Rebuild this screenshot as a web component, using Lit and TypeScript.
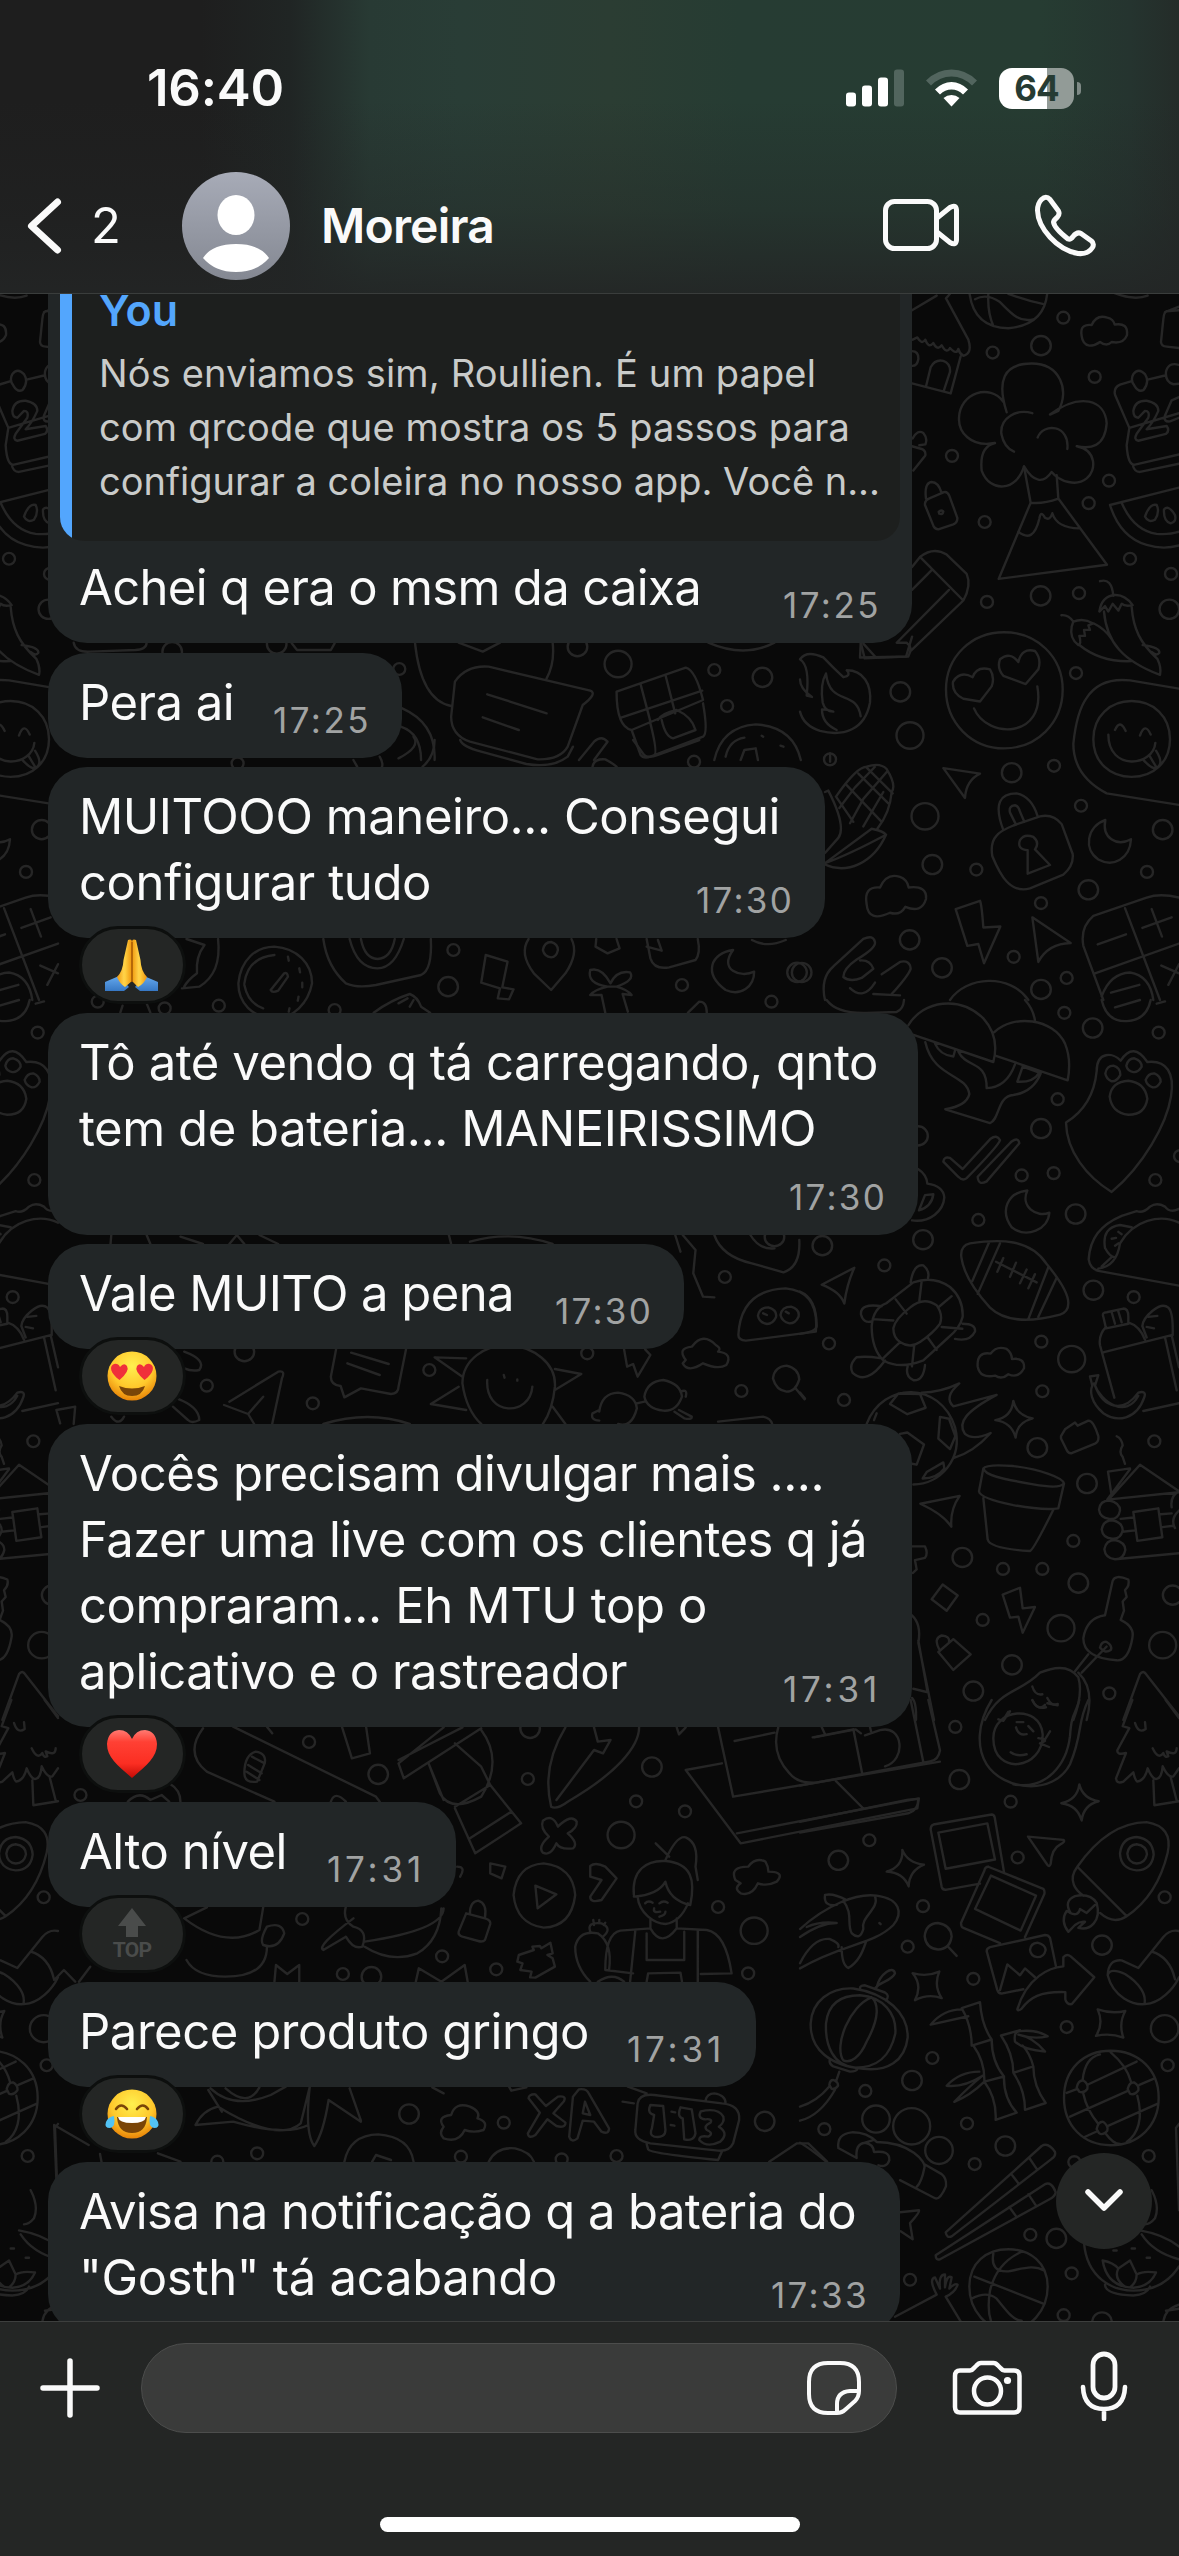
import { LitElement, html, svg, css } from "lit";
import { customElement, property } from "lit/decorators.js";

/* ---------- data ---------- */

interface Line { text: string; w: number }
interface Message {
  id: number;
  width: number;
  lines: Line[];
  time: string;
  timeW: number;
  reaction?: string;
  quote?: boolean;
  timeBelow?: boolean;
}

const QUOTE: Line[] = [
  { text: "Nós enviamos sim, Roullien. É um papel", w: 717 },
  { text: "com qrcode que mostra os 5 passos para", w: 751 },
  { text: "configurar a coleira no nosso app. Você n...", w: 781 },
];

const MESSAGES: Message[] = [
  { id: 1, width: 864, quote: true, time: "17:25", timeW: 98, lines: [{ text: "Achei q era o msm da caixa", w: 622 }] },
  { id: 2, width: 354, time: "17:25", timeW: 98, lines: [{ text: "Pera ai", w: 155 }] },
  { id: 3, width: 777, time: "17:30", timeW: 98, reaction: "pray", lines: [
    { text: "MUITOOO maneiro... Consegui", w: 701 }, { text: "configurar tudo", w: 352 }] },
  { id: 4, width: 870, time: "17:30", timeW: 98, timeBelow: true, lines: [
    { text: "Tô até vendo q tá carregando, qnto", w: 799 }, { text: "tem de bateria... MANEIRISSIMO", w: 737 }] },
  { id: 5, width: 636, time: "17:30", timeW: 98, reaction: "love", lines: [{ text: "Vale MUITO a pena", w: 435 }] },
  { id: 6, width: 864, time: "17:31", timeW: 98, reaction: "heart", lines: [
    { text: "Vocês precisam divulgar mais ....", w: 745 },
    { text: "Fazer uma live com os clientes q já", w: 788 },
    { text: "compraram... Eh MTU top o", w: 628 },
    { text: "aplicativo e o rastreador", w: 548 }] },
  { id: 7, width: 408, time: "17:31", timeW: 98, reaction: "top", lines: [{ text: "Alto nível", w: 208 }] },
  { id: 8, width: 708, time: "17:31", timeW: 98, reaction: "joy", lines: [{ text: "Parece produto gringo", w: 510 }] },
  { id: 9, width: 852, time: "17:33", timeW: 98, lines: [
    { text: "Avisa na notificação q a bateria do", w: 777 }, { text: "\"Gosth\" tá acabando", w: 478 }] },
];

/* ---------- wallpaper: line doodles, grouped in patches with their own scale ---------- */

interface Patch { x: number; y: number; sx: number; sy: number; dots: [number, number[]][]; paths: string[] }

const EAST_A: Patch = {
  x: 800, y: 280, sx: 1 / 3, sy: 0.45918,
  dots: [
    [6, [790,82,578,158,884,211,456,383,927,437,866,486,554,527,990,607,1113,640,561,701,837,682,828,856,90,1044,762,1058,843,1145,529,1284,1041,1289,723,1357,641,1474,800,1520]],
    [9.8, [723,143,722,688,1108,717,301,897,635,1073,1088,1197,397,1273,865,1328,329,1437,426,1498,723,1545,5,1508]],
    [13.5, [330,992,375,1168]],
  ],
  paths: [
    // hut
    "M336 66L410 34M438 40L505 130Q518 160 490 165Q478 160 475 150Q470 164 450 148Q440 162 425 142Q412 155 400 137Q385 150 376 130Q365 142 352 125L338 130M438 40L450 30M482 166L452 247L336 225M378 232L392 190Q405 172 430 176Q452 182 450 200L432 240M336 155Q356 155 355 172Q352 187 337 187",
    // ball
    "M508 26Q520 104 625 105Q735 98 742 26M565 30Q562 70 580 100M525 42Q560 28 600 48C640 78 660 92 700 86M625 30Q680 45 728 52",
    // clouds
    "M845 122Q838 95 875 98Q890 74 922 82Q940 85 944 97Q985 92 981 120Q970 140 935 135Q920 146 900 135Q885 143 868 143Q848 140 845 122Z",
    "M200 1360Q190 1320 240 1323Q260 1290 300 1300Q322 1306 326 1323Q382 1318 378 1348Q365 1380 316 1365Q300 1385 270 1378Q205 1400 200 1360Z",
    "M935 26Q1000 46 1043 34",
    "M1137 66L1100 68Q1092 70 1090 85L1083 135Q1084 145 1100 145L1137 148M1095 70L1137 58",
    // blossom on a volcano
    "M620 288C590 220 610 182 695 182C780 182 810 240 775 285L750 293C840 245 915 260 920 312C915 365 870 368 830 362C890 370 890 415 860 432C830 450 780 440 755 418C730 445 700 440 672 406C650 460 570 465 545 415C540 380 555 360 585 355C510 365 475 330 477 300C480 245 570 225 610 265M697 290C650 280 600 300 604 335Q612 365 642 374M713 343C730 310 810 315 802 368",
    "M672 406L692 485L596 651L921 620L775 476L770 425M692 485Q730 488 775 476M655 548Q700 575 718 520Q722 500 735 518Q750 525 757 508Q770 540 838 541",
    // calendar
    "M995 220L960 228Q940 235 945 250L988 322L980 360Q984 405 1005 402L1137 380M988 322L1137 290M1043 217L1095 208M998 402Q1002 418 1020 418L1137 400M1000 205Q1015 190 1035 205Q1050 222 1030 240Q1015 245 1003 230Q990 218 1000 205ZM1137 185Q1105 178 1098 200Q1095 222 1120 227L1137 226M1000 285Q1005 262 1040 263Q1075 268 1075 285Q1060 310 1040 325L1100 318Q1110 328 1098 335L1015 350Q1000 348 1010 335L1045 300Q1050 285 1035 285L1015 300Q1000 300 1000 285ZM1137 255L1115 262L1095 295Q1090 310 1110 308L1137 300",
    // watermelon
    "M1137 452L930 490Q960 560 1040 577Q1090 588 1137 578M965 485Q1000 545 1070 553Q1110 555 1137 548M1035 515Q1050 485 1070 490Q1080 505 1065 522Q1045 530 1035 515ZM1092 500Q1105 488 1125 512Q1130 527 1112 530Q1090 525 1092 500Z",
    // padlocks
    "M375 490Q373 480 390 475L432 462Q442 460 448 470L472 518Q473 528 460 532L415 543Q405 543 400 535ZM378 476Q372 442 395 440Q415 440 425 464M416 505Q423 500 430 504Q428 512 418 509ZM338 345Q352 325 370 333Q384 345 376 358L358 360M336 362L365 368Q378 372 376 382L340 415",
    "M577 1255Q570 1225 590 1210Q600 1200 640 1188L720 1168Q760 1162 785 1185L818 1250Q822 1275 790 1295L690 1325Q650 1333 620 1310Q600 1295 577 1255ZM610 1198C580 1140 600 1118 650 1118Q695 1125 713 1168M648 1186L630 1160Q625 1145 645 1144Q655 1145 660 1158L673 1180M683 1242Q650 1240 660 1220Q672 1205 700 1213Q720 1225 705 1240L750 1274L683 1293Z",
    // pencil
    "M336 625L360 603Q400 580 440 598L500 640Q515 665 490 698L333 807M360 603L490 698M395 632L336 675M447 675L290 790L320 790Q340 800 325 820L180 822L182 792M190 792L225 820",
    // chillies
    "M900 656Q935 648 940 688M898 722Q905 688 945 686Q975 685 998 708Q975 712 965 705L955 720L938 705L925 722L915 710ZM912 722C920 790 970 830 1080 860Q1085 845 1072 825C1020 790 1000 760 995 712M1028 795Q1080 800 1078 812Q1070 820 1055 810M784 730Q805 728 820 744Q850 735 880 748L865 752L870 762L852 762L855 775L838 775Q845 792 835 795Q808 780 815 755L820 744M838 795C880 820 930 832 995 830M882 748Q915 760 935 782",
    // heart-eyed smiley
    "M438 892C438 820 515 767 612 767C710 767 788 820 788 892C788 965 710 1020 612 1020C515 1020 438 965 438 892ZM540 918L490 912Q455 900 459 875Q480 850 518 865Q530 840 570 848Q585 865 575 885ZM677 880L610 862Q590 845 600 826Q630 808 655 832Q665 800 705 808Q725 825 715 848ZM522 933C560 1000 740 1000 712 885",
    // flame
    "M0 826Q20 805 70 822Q100 845 130 865Q155 862 140 850C190 850 215 880 210 920C195 980 130 995 60 982Q10 970 0 940M0 826Q30 840 20 905L36 908Q0 890 0 870M78 857Q60 880 68 920Q75 940 100 940Q80 935 66 935Q65 965 110 980M78 857C90 930 170 890 182 950",
    // tongue-out smiley with envelope
    "M1137 890L990 872Q900 865 860 910Q830 940 820 1010Q820 1080 920 1118L1137 1143M880 1000C880 950 930 917 995 917C1060 917 1110 950 1110 1000C1110 1050 1060 1082 995 1082C930 1082 880 1050 880 1000ZM925 990C925 1070 1060 1060 1066 1008M945 980Q960 955 977 982M1020 992Q1035 962 1052 990M1030 1045Q1060 1070 1075 1060Q1090 1050 1068 1025M1050 1038L1068 1060",
    // cursors
    "M430 1063L540 1075Q498 1090 495 1128ZM697 1388L812 1444Q745 1445 715 1485Z",
    // corn
    "M75 1270L215 1195Q250 1200 258 1208C220 1270 140 1295 75 1273M75 1270Q150 1250 258 1208M75 1115L85 1112Q140 1190 115 1215L75 1248M108 1125Q170 1060 200 1060Q240 1050 260 1065Q290 1100 275 1115Q270 1160 232 1195M108 1125L160 1180M140 1100L245 1180M175 1075L265 1140M200 1062L278 1118M150 1183L190 1130L262 1070M118 1150L165 1105L225 1060M190 1190L250 1115",
    // moon
    "M916 1176C860 1190 850 1240 895 1262C940 1280 990 1260 993 1218C950 1235 905 1215 916 1176Z",
    // bolt
    "M467 1370L540 1352Q545 1360 550 1410L601 1408L552 1488L535 1446L502 1450Z",
    // rock hand
    "M75 1568Q60 1520 100 1495L190 1435Q220 1425 225 1442Q228 1455 170 1480Q130 1500 130 1518Q150 1530 185 1520L220 1500Q210 1480 180 1482M150 1542Q190 1570 225 1530M245 1512L300 1485Q330 1480 332 1500Q325 1515 275 1555M220 1555L300 1558",
    // calculator
    "M1137 1345Q1080 1335 1040 1345L880 1385Q840 1410 850 1450L910 1568M975 1368L1080 1568M885 1510L1137 1445M893 1447L978 1425M1027 1411L1115 1388M1055 1370L1086 1430M1084 1493L1137 1510M1105 1535L1137 1490M905 1560Q930 1510 990 1508Q1050 1515 1060 1568M933 1552L1018 1535",
    "M450 1568C500 1515 630 1510 685 1568",
  ],
};

const EAST_B: Patch = {
  x: 800, y: 1000, sx: 1 / 3, sy: 0.45918,
  dots: [
    [6, [793,28,1076,71,773,216,665,382,761,377,1066,392,535,479,253,578,1001,647,724,744,87,748,132,871,727,852,1063,961,820,1178,609,1239,727,1239,548,1350,928,1510,1140,340]],
    [9.8, [878,61,723,280,354,296,827,466,67,535,369,522,880,632,712,975,861,1053,487,1214,835,1270,1118,1296,636,1448,520,1505]],
    [13.5, [815,782,783,1368,1088,1405]],
  ],
  paths: [
    // toucans
    "M325 55C370 0 480 -10 550 40Q600 80 580 135L325 72M583 70C640 30 760 40 795 95Q815 130 803 175L590 122M376 92C400 170 500 160 508 205Q500 230 436 238L570 268C600 260 590 210 640 207Q700 200 722 160M405 95Q420 120 460 123L465 110M475 112C500 150 560 130 560 192Q620 190 645 140M652 178L668 145L718 158Q700 180 652 178ZM675 0Q700 20 705 45",
    "M80 0Q110 30 200 28L290 26Q310 20 312 0",
    "M905 0Q920 48 980 46Q1040 44 1052 0M945 16L1020 0M1070 8L1095 3",
    // paw
    "M798 267Q880 230 890 155C890 110 940 115 962 132Q1000 90 1042 135C1100 130 1125 160 1113 210C1100 270 1030 360 935 418C860 385 800 330 798 267ZM916 160Q920 143 940 143Q962 148 961 163Q950 178 935 177Q918 172 916 160ZM979 143Q985 127 1003 127Q1025 132 1025 145Q1015 158 1000 157Q982 154 979 143ZM1037 174Q1045 159 1063 160Q1082 166 1082 178Q1072 192 1057 190Q1040 185 1037 174ZM929 210Q935 178 985 176Q1035 180 1042 215Q1035 250 985 250Q935 246 929 210Z",
    // check marks
    "M430 352Q432 340 450 344L488 368L572 302Q590 292 600 305Q598 315 500 388Q488 395 475 385ZM533 385L635 308Q655 298 658 312L560 395Q535 405 533 385Z",
    // hat
    "M354 368Q380 380 382 400Q430 405 433 430C430 460 390 485 336 480M357 458L375 425L400 423Q395 450 357 458Z",
    // moon
    "M682 415C620 420 600 460 635 495C680 520 745 500 748 463C710 475 660 450 682 415Z",
    // football
    "M484 560Q480 535 510 530C600 520 690 520 740 575C780 610 805 640 805 660Q805 680 780 685C700 700 620 705 570 670C520 630 490 595 484 560ZM567 528L517 612M600 530L533 640M745 582L685 695M770 605L715 690M588 570L710 615M610 562L592 592M648 572L630 603M680 587L660 617M705 597L685 628",
    // turtle
    "M215 710Q220 670 260 660L340 615Q400 600 450 625Q490 650 488 690Q480 715 445 735L370 785Q300 805 250 785Q215 760 215 710ZM280 715Q285 695 330 670Q370 645 410 665Q430 685 420 705Q400 725 360 745Q330 760 300 745Q280 735 280 715ZM287 652L320 683M365 612L358 655M455 645L417 668M487 716L425 712M410 762L383 735M336 798L343 750M250 780L300 745M218 695L280 698M332 615Q340 575 370 578Q390 590 384 605M245 667Q180 660 183 685Q190 705 215 700M488 705Q528 705 525 722Q510 745 465 738M375 795Q370 830 340 828Q315 820 323 798M240 780Q200 775 170 778Q145 795 158 812Q200 840 255 785",
    // cursors
    "M65 620L163 583Q140 620 133 661Q120 635 65 620ZM361 1097L479 1080Q450 1110 454 1147Q430 1120 361 1097Z",
    "M0 635Q50 650 50 710Q50 722 0 727M0 855L15 868",
    // clouds
    "M533 798Q530 765 572 770Q590 752 620 760Q635 768 636 782Q675 778 672 802Q655 825 625 815Q605 828 585 818Q540 825 533 798Z",
    // taco
    "M1137 455Q1110 465 1095 450Q1070 440 1050 450Q1030 465 1010 460L965 470C900 490 870 520 866 565Q870 585 895 590L1137 622M895 585Q950 580 960 530C1000 480 1080 465 1137 485M915 540Q905 495 960 490L995 495M915 540Q930 560 945 560M935 520L948 518M945 535L955 530M955 505L965 510M905 580L935 560",
    // grocery bag
    "M910 690Q905 680 920 680L970 672Q985 672 985 690L985 705L918 715ZM935 680L945 705M955 678L965 702M918 712Q895 730 900 752L943 866M985 702Q1020 710 1035 740M912 767L1115 730M1118 730Q1120 680 1105 670C1080 655 1030 690 1027 710L1040 735M1045 690L1072 688M1040 712L1062 715M1095 735L1130 850M1115 730L1137 800M1030 895L1137 878M870 820L895 817L885 840C910 890 970 900 1015 855Q1040 850 1033 865C1010 915 950 920 910 900C870 875 870 850 877 840ZM882 835C905 880 980 910 1015 862",
    // soccer ball with comet tail
    "M200 923C250 830 420 830 465 930C490 1000 420 1055 340 1055M270 880L295 857L360 858L377 888L322 902ZM420 908L447 912L466 950L450 978L415 955ZM300 945L322 942L372 968L350 1012L336 1010M368 1042L380 1028L430 1007L433 1020Q410 1042 368 1042ZM365 855Q420 855 478 835Q430 865 460 885L590 860C500 895 470 920 495 945Q520 960 572 943Q520 985 462 997M222 915L230 900",
    // sparkle, plate
    "M640 873Q650 905 698 911Q650 920 647 953Q635 920 586 915Q635 908 640 873ZM783 950L795 935L825 920L833 927L865 916Q880 915 895 950Q897 962 885 966L815 987Q805 988 800 980L783 955Z",
    // flower pot
    "M550 1020Q560 1010 640 1015C720 1022 790 1040 792 1053Q780 1065 700 1055C600 1042 555 1035 550 1020ZM550 1020L537 1070Q540 1085 640 1100Q730 1112 775 1107L792 1053M550 1085L563 1175Q570 1195 690 1200Q700 1198 760 1110",
    // log cabin
    "M950 950Q965 955 968 970Q955 985 968 995L975 1010M924 1027L990 1020M924 1027L935 1080M990 1022L922 1088L1137 1072M928 1086L1020 1012L1137 1070M897 1110Q900 1090 928 1090Q960 1095 960 1112Q955 1132 928 1130Q900 1128 897 1110ZM905 1153Q910 1133 937 1133Q968 1138 968 1155Q962 1175 937 1173Q908 1172 905 1153ZM913 1196Q918 1176 945 1176Q976 1181 976 1198Q970 1219 945 1218Q916 1216 913 1196ZM1000 1115L1075 1107L1087 1170L1012 1178ZM962 1130L1000 1127M968 1158L1005 1155M1082 1120L1115 1118M1087 1148L1120 1145M945 1218L1137 1205M1137 1070Q1110 1080 1115 1105M1137 1112Q1110 1130 1125 1150",
    // small shapes
    "M336 1190L375 1190Q385 1205 375 1215L345 1220L350 1240L338 1248M395 1305L428 1273L473 1297L440 1330ZM608 1295L660 1280L668 1325L705 1322L668 1378L655 1343L630 1345ZM415 1420L460 1392L512 1425L460 1459ZM417 1413Q400 1390 425 1384Q450 1385 447 1398",
    // key
    "M915 1340L938 1265Q945 1250 985 1262Q990 1275 975 1285L980 1300L968 1310L972 1330L962 1350Q1005 1365 997 1390Q985 1440 950 1438C890 1435 850 1420 850 1390Q860 1345 915 1340ZM900 1410Q905 1396 920 1398Q937 1405 933 1415Q915 1425 900 1410ZM920 1408L845 1465M865 1425L825 1462",
    // avocado top
    "M555 1568C600 1500 660 1510 720 1465Q800 1440 835 1475Q850 1510 820 1568M835 1465Q885 1500 860 1568M697 1495Q705 1515 727 1512M697 1525Q715 1550 735 1535M742 1520Q755 1540 773 1533M610 1568L625 1550",
    // pine top
    "M970 1568L1020 1468Q1030 1458 1040 1470L1137 1560",
    // laptop edge
    "M336 1340Q365 1360 355 1400L402 1568M355 1395L382 1505M340 1500L380 1507M336 1520Q350 1530 348 1568",
  ],
};

const EAST_C: Patch = {
  x: 800, y: 1700, sx: 1 / 3, sy: 0.40179,
  dots: [
    [6, [466,67,632,253,208,349,653,392,369,513,323,614,1094,491,520,694,800,814,1103,909,397,891,196,973,73,1068,501,1054,1046,1135,524,1155,691,1331,330,1443,815,1427,791,1531,823,1150]],
    [9.8, [478,198,115,399,906,610,336,947,616,1110,769,1340,906,1548]],
    [13.8, [1094,818,228,1043,417,1121]],
    [18.5, [335,1061]],
  ],
  paths: [
    // laptop
    "M385 0L420 125Q415 150 390 153L0 213M332 0L370 155M38 93L160 73L187 185M195 88L240 75C310 60 320 150 255 165M0 303L325 248L355 246Q355 275 325 282L0 330M108 202L190 270M65 67L75 85M210 67L213 78",
    // avocado
    "M575 0C530 60 530 120 560 160C610 225 760 240 810 160C850 80 830 60 865 0M640 210C740 225 800 160 810 90C815 30 825 40 838 0M580 95C580 20 720 10 728 85C730 175 580 190 580 95ZM648 68Q655 90 680 85M650 55L670 55M685 65L700 78M632 130Q650 142 680 135M595 48L610 52L630 28M715 95L735 98L750 78M735 102L720 108L747 117M697 0Q710 25 738 18M742 8L773 13",
    // pine
    "M997 0L968 65L988 70L952 125Q950 138 978 132L948 195Q950 210 970 203L1000 180Q1005 200 1012 203Q1035 200 1043 170Q1055 195 1068 197Q1085 195 1088 165Q1105 195 1120 190L1137 170M1005 57Q1015 85 1037 72L1035 55M1058 120Q1075 150 1090 132Q1095 145 1105 140L1100 128Q1130 140 1130 120M1060 200L1063 262L1137 252M1112 192L1130 250M1097 0L1137 45",
    // sparkles
    "M838 210Q848 245 896 252Q850 262 845 300Q832 262 784 257Q832 248 838 210ZM307 373Q322 405 372 410Q328 425 326 464Q310 430 260 427Q310 415 307 373ZM338 680Q380 690 418 676Q400 710 425 742Q385 730 345 747Q368 710 338 680ZM893 770Q935 782 976 774Q955 805 970 840Q930 828 888 836Q912 805 893 770Z",
    // photos
    "M392 322Q392 312 400 310L575 285Q582 285 584 292L612 428M392 322L425 465Q428 474 440 472L540 457M415 330L562 307L585 397L437 420ZM565 415L730 470Q735 475 733 483L675 590M565 415Q555 415 553 425L483 555Q483 565 490 567L600 605M573 437L708 487L662 574L525 520ZM560 625Q560 618 570 615L735 585Q745 585 750 592L768 663M560 625L592 722Q596 732 608 730L670 720M690 622Q692 605 712 604Q735 608 737 622Q732 640 712 640Q692 638 690 622ZM600 722L622 658L660 685L675 668L705 690",
    // arrow
    "M652 770C680 690 750 665 790 663L790 640Q800 630 812 638L883 690L815 757Q800 758 796 745L796 727C720 725 690 740 665 768Q655 775 652 770Z",
    // cursor
    "M684 340L790 348Q798 352 780 360Q755 370 752 408Q748 418 742 410Z",
    // rocket
    "M832 415C870 370 940 305 1040 304Q1120 315 1103 380C1080 460 1030 510 980 538Q940 560 900 530M832 415L980 538M832 415C800 450 830 475 850 487M960 382Q965 343 1010 341Q1058 346 1061 385Q1055 424 1010 424Q962 420 960 382ZM982 382Q986 360 1010 359Q1040 363 1041 384Q1035 407 1010 407Q984 405 982 382ZM805 577Q780 550 800 525L812 530Q790 500 825 488Q870 480 890 505C905 550 870 575 835 567L855 552Q840 550 825 560ZM810 530Q835 540 840 520L860 530L885 510",
    // koi
    "M0 570C80 510 170 480 230 487C300 495 310 530 280 560C220 610 130 605 0 668M75 485Q100 480 140 498M75 485Q70 515 110 510M130 500C160 530 140 560 155 580Q180 600 190 570C180 540 240 520 225 488M0 590Q60 555 110 555Q60 550 20 565M0 655Q40 590 90 595Q120 605 115 615M125 615Q125 660 145 667C180 650 190 620 198 602M238 555L242 558",
    // magnifier
    "M374 588Q378 556 414 555Q452 560 455 588Q450 620 414 621Q378 618 374 588ZM443 613L470 637",
    // lantern
    "M32 805C35 750 90 715 160 718C260 730 325 780 323 840C315 900 260 925 190 918C90 910 30 870 32 805ZM78 805C85 750 130 735 180 735C250 740 290 780 286 830C270 890 230 915 165 915C100 910 75 860 78 805ZM215 740C150 760 100 860 130 897C150 905 180 890 200 850C240 790 235 755 215 740ZM182 722Q175 710 195 710L255 728Q270 735 258 748M90 893Q85 905 100 912L150 925Q170 925 172 918M230 715C240 680 280 660 285 680C275 700 240 700 225 718M118 925L108 950M88 958Q90 945 101 946Q115 950 114 960Q105 970 95 968ZM88 962Q50 1000 0 1012M105 970Q60 1035 0 1047",
    // bamboo
    "M485 767L540 752Q545 810 575 845L515 860Q515 810 485 767ZM575 845Q575 900 612 937L553 950Q555 900 520 860M612 937Q610 990 650 1027L587 1045Q590 990 553 950M485 770Q430 770 392 808L505 787M538 925Q480 925 440 960Q490 965 548 935Q510 960 463 1000Q510 985 553 950M603 835L660 822M603 835Q640 880 640 928L700 912Q690 880 668 860M640 928Q675 970 675 1020L737 1003Q700 960 700 912M645 850Q640 825 660 824Q710 820 743 837Q700 845 655 833Q700 840 735 875Q670 870 645 850Z",
    // stocking
    "M1137 575Q1110 570 1090 590L1015 667L965 648Q925 645 923 685C940 740 1000 760 1035 757C1080 755 1120 720 1137 690M923 685Q930 665 975 682C1020 705 1040 735 1033 757M1055 626Q1110 640 1125 695",
    // globe
    "M792 990C792 920 850 873 932 873C1015 873 1076 920 1076 990C1076 1060 1015 1108 932 1108C850 1108 792 1060 792 990ZM830 965Q835 945 850 947Q866 955 862 968Q850 980 838 975ZM983 968Q988 950 1003 952Q1018 960 1015 972Q1003 985 990 980ZM890 1068Q895 1048 910 1050Q926 1060 922 1072Q908 1085 897 1078ZM900 882Q855 890 848 945M800 978L832 968M864 957L1010 900M850 980Q860 1020 895 1055M810 1037L985 972M1018 958L1060 943M932 877Q980 910 993 950M1012 985C1030 1040 1015 1080 980 1100M855 1087L890 1074M924 1060L1072 1005M918 1080Q940 1105 960 1105",
    // chopsticks
    "M437 1325L725 1110Q745 1100 765 1125Q768 1135 755 1142L455 1335Q440 1340 437 1325ZM407 1382L735 1205Q755 1198 767 1225Q765 1235 750 1242L420 1392Q407 1395 407 1382ZM688 1140L710 1167M636 1182L657 1205M685 1230L707 1257M628 1262L650 1287",
    // scroll
    "M115 1115Q110 1080 155 1076Q200 1075 230 1100C330 1100 380 1150 373 1165Q365 1200 350 1212M115 1115L170 1140Q165 1105 195 1102Q220 1105 222 1125Q270 1120 268 1145Q260 1165 235 1158M222 1095L190 1103M300 1195L405 1240Q420 1245 438 1210Q440 1190 425 1180L372 1155M0 1102Q20 1110 80 1150",
    // star
    "M300 1275L357 1270Q360 1275 330 1302L338 1342L302 1322",
    // basketball
    "M508 1460C508 1400 560 1367 625 1367C690 1367 743 1400 743 1460C743 1520 690 1568 625 1568C560 1568 508 1520 508 1460ZM523 1435L728 1502M580 1378Q570 1425 625 1422C670 1415 700 1405 732 1420M515 1490Q560 1470 590 1490C620 1520 640 1545 665 1545M668 1372Q590 1400 570 1470Q560 1520 575 1550",
    // hand
    "M285 1535L410 1480M437 1485L483 1548M410 1480Q385 1440 405 1437L420 1465Q415 1430 435 1430L435 1462Q440 1430 455 1437L448 1465Q465 1450 473 1455Q465 1475 437 1485",
    // lotus pot
    "M852 1350C860 1440 940 1470 1000 1470Q1090 1470 1137 1410M915 1455Q915 1480 1000 1482Q1040 1480 1050 1460M908 1395Q940 1400 955 1415L990 1395L1010 1430Q1030 1420 1068 1425Q1050 1460 1000 1463Q920 1460 908 1395ZM955 1415Q940 1440 975 1460M1010 1430Q1010 1450 990 1462M1055 1220Q1080 1260 1065 1290Q1050 1305 1035 1305M1020 1320Q1090 1330 1137 1360M1025 1330Q1060 1375 1137 1392M940 1370L950 1370M995 1365L1005 1365M1040 1388L1050 1388",
    "M1128 1065L1137 1055M1128 1065L1137 1270M1090 1548Q1095 1515 1137 1505M1098 1520L1137 1515",
  ],
};

const MID: Patch[] = [
  {
    x: 0, y: 280, sx: 0.75191, sy: 1 / 3,
    dots: [[6, [531,1167,950,1170,967,1278]], [9.8, [768,1100,1014,1192,229,1115,368,1092]], [13.5, [822,1152]]],
    paths: [
      // chat bubble
      "M605 1205Q620 1155 650 1160L785 1232Q795 1240 775 1275L755 1400Q745 1440 715 1438L625 1385Q600 1365 600 1310ZM648 1243L727 1300M642 1312L690 1350M552 1090Q560 1260 600 1278M610 1088L642 1115L665 1088M735 1088Q738 1150 727 1195",
      // gift
      "M820 1235L912 1163Q925 1170 935 1260L840 1350Q820 1340 820 1235ZM826 1313L934 1232M852 1213L865 1325M885 1185L898 1300M840 1350L852 1425Q856 1437 865 1430L935 1370Q942 1360 935 1270M875 1320Q880 1300 900 1290Q920 1310 925 1350L895 1375Q885 1370 880 1320M865 1330Q875 1420 870 1425",
      // pan
      "M950 1440Q960 1340 1005 1333Q1055 1340 1065 1440M965 1430Q970 1380 990 1373M985 1440L990 1410L1005 1405L1008 1440M535 1285Q580 1330 578 1440M533 1340Q560 1360 560 1440M770 1440L790 1385Q800 1365 808 1385L790 1440M98 1088Q100 1118 120 1115L180 1110Q195 1108 195 1088M388 1090L395 1110L440 1110L445 1090M942 1088Q990 1135 1030 1088M1145 1090L1150 1135L1205 1130L1213 1070M1013 1367L1015 1370M1038 1397L1042 1400M1104 1445L1104 1420",
    ],
  },
  {
    x: 0, y: 740, sx: 0.75191, sy: 1 / 3,
    dots: [[6, [923,65,603,630,907,735,291,797,1026,785,445,810,219,805,130,785,316,70]], [9.8, [596,740,1060,697]]],
    paths: [
      "M612 0Q615 20 640 35L700 72Q735 85 755 50L762 20M842 0L855 40Q860 58 875 45L930 0M578 0Q578 50 562 80M530 55Q560 20 550 -10M788 80Q790 55 805 58Q815 70 820 80M470 60L475 80M505 50Q510 70 508 80",
      // timer
      "M317 730C320 660 340 620 365 620C395 625 415 670 415 730C410 790 390 835 365 838C335 830 317 790 317 730ZM325 730C328 680 340 650 365 645M325 735Q330 790 350 805M360 750L378 700Q382 695 383 710L370 752Q362 760 360 750ZM383 650L384 662M398 685L399 697M402 728L402 742M397 770L396 782M385 805L384 815",
      // croissant, speaker, card, pin, bow, shield, moon
      "M248 597L272 615Q260 650 262 700Q250 720 245 740M290 597Q295 700 265 740L242 745",
      "M430 597Q435 680 460 730Q475 745 500 735L560 705Q575 690 573 597M465 597Q475 685 502 685Q525 685 537 597M480 597Q485 655 502 657Q520 655 525 597",
      "M646 645L675 665L668 742L683 748L677 778L662 775L665 745L640 728Z",
      "M703 597Q690 640 710 700L733 750L752 700Q770 640 760 597M722 630Q724 606 733 606Q742 612 742 630Q740 652 733 652Q724 650 722 630Z",
      "M785 690Q800 680 812 730Q820 690 838 697Q845 720 820 740Q835 750 840 765L828 762L835 815M785 690Q780 730 808 740Q790 750 785 765L800 765L805 818M808 740L820 740M793 597L792 620L808 640L824 625L820 597",
      "M860 597L865 655Q870 690 890 682L925 660Q932 640 928 597M860 620L880 632L875 600",
      "M975 630C945 640 935 700 965 750C985 770 1003 740 1003 695C985 715 955 690 975 630Z",
      "M497 818Q520 780 545 762Q555 770 560 800L572 818M530 790L542 775M545 800L550 780M915 818L930 785Q940 785 940 818M1000 600Q1020 625 1045 600",
      "M160 818L163 797M200 818L195 790",
    ],
  },
  {
    x: 0, y: 1220, sx: 0.75191, sy: 1 / 3,
    dots: [[6, [964,171,571,450,416,550,275,497,986,513,781,400]], [9.8, [325,395,1030,50]]],
    paths: [
      "M908 45L925 90L922 160L935 230L950 232M898 45L905 95M950 45Q960 110 1000 130L1042 157Q1065 140 1063 60M998 45Q1010 90 1030 85M148 45L147 72M195 45L200 72M240 50L270 72M305 72L315 45L325 72M345 45L370 72M597 45L600 72M625 65Q680 30 735 72",
      // note
      "M447 388L440 470Q440 495 453 498L458 532L480 505L520 522Q530 520 530 500L540 388M467 398L517 432M462 430L505 465",
      // sun
      "M615 490C615 420 645 375 675 375C710 380 740 430 738 500Q735 570 722 612M615 490Q620 570 640 612M620 415L578 412L615 470M610 500L573 552L620 570M738 447L773 462L738 510M735 560L752 612M648 480C645 590 705 590 708 500M670 465L671 473M688 478L688 482M305 545L370 455Q380 450 375 475L362 612M298 555L330 582L350 530M330 582L338 612",
      "M830 388L834 440L842 432L848 470L865 405L858 388",
      "M912 420Q900 385 920 380Q935 335 952 375Q960 385 955 395Q975 400 966 435Q955 450 935 430Q915 460 908 430Z",
      // glasses
      "M797 575Q800 520 822 518Q845 525 847 565Q840 625 822 612M857 530Q860 485 882 480Q905 490 907 530Q900 575 882 572Q860 565 857 530ZM847 550L857 545M797 570L788 580Q785 600 797 602M905 515Q915 505 912 530M903 570L920 590Q920 600 910 595L897 575M430 612Q490 570 545 612M955 605L1015 590Q1025 595 1027 612",
      "M1028 475Q1030 440 1046 437Q1062 445 1063 478Q1058 515 1046 515Q1032 510 1028 475ZM1058 505L1070 538M245 395Q275 420 265 450Q255 455 245 445M235 535Q265 560 265 600Q255 612 250 600L230 560M75 570L100 560L98 612M75 570L80 610M148 590Q158 620 165 590",
      // ghost
      "M982 345Q985 210 1045 205Q1090 215 1085 335L992 362Q982 360 982 345ZM1008 287Q1010 262 1022 262Q1034 270 1032 292Q1028 312 1020 312Q1010 308 1008 287ZM1038 285Q1040 260 1052 260Q1064 268 1062 290Q1058 310 1050 310Q1040 305 1038 285ZM1015 280L1020 285M1045 275L1049 280",
    ],
  },
  {
    x: 0, y: 1700, sx: 0.75191, sy: 1 / 3,
    dots: [[6, [411,126,702,237,846,304,911,334,955,621,402,657,588,769,456,822,660,808,995,820,342,1360,670,1268,820,1368,613,1370,289,1385,747,1378,107,285]], [9.8, [503,223,867,201,705,85,544,1242,1017,1264,494,830]], [13.5, [826,405,1003,692]]],
    paths: [
      // skateboard
      "M310 80L500 290L505 305M270 85Q245 160 275 215L365 305M325 220Q325 165 340 155Q355 160 352 190L342 245Q325 250 325 220ZM330 195L348 220M328 215L345 240M335 170L352 190M355 80L362 100M440 305Q445 270 460 305M170 305Q185 270 200 300L215 285L225 305M225 250Q240 270 240 305",
      // drum
      "M455 82L468 175L492 160L487 82M590 82L530 190L537 235L640 85M530 180L615 82M570 190L585 280Q600 340 640 290C660 220 660 150 640 90M605 130L640 200L652 255L693 370L632 460L605 325M652 255L605 320M680 335L625 415M570 190L590 300",
      "M752 82Q720 200 733 320Q740 330 755 305C820 220 850 140 850 82M790 82L795 125L812 120L802 160L790 150L740 300",
      "M900 82L903 103L912 82",
      // x mark
      "M722 362Q735 340 742 380Q760 340 767 365Q768 385 755 400Q770 430 762 445Q745 450 740 430Q732 470 722 458Q715 440 730 410Q718 385 722 362Z",
      // laptop
      "M955 82L975 290L1250 185M912 210L960 190M912 210L985 430L1220 325L1222 295L980 400M977 123L1030 98M1035 82Q1025 160 1050 220Q1060 250 1085 248M1083 112L1138 88L1145 100",
      // play
      "M683 585Q687 495 723 490Q762 500 765 585Q760 680 723 683Q687 672 683 585ZM712 557L740 583L715 625ZM785 498Q792 485 805 500L820 535L800 600Q785 610 785 590L800 540L785 530ZM652 490L672 500L667 535L652 520ZM608 500Q620 500 612 530",
      // woman
      "M885 480Q900 405 912 412Q930 430 925 500L928 540M872 430L890 470M843 585C840 510 860 480 885 483C920 490 925 540 918 615Q890 600 885 545Q875 585 843 590M848 590C850 640 870 670 885 672Q905 665 915 610M858 610Q862 600 868 608M877 610Q882 600 888 608M870 625Q868 640 878 635M877 650Q885 645 885 635M865 655L865 685Q880 745 900 685L900 655M865 685L825 692Q805 700 805 810L842 820M900 685L940 690Q965 700 973 820L932 822M845 690L838 845M860 700L860 780L910 780L910 695M928 690L928 845M860 845L862 820L905 818L907 845M765 740Q770 690 795 700Q815 730 810 810M765 740Q765 800 785 845M795 845Q815 815 830 845M785 695Q780 665 800 670Q815 685 802 710M790 675L789 660M797 670L797 660M803 675L805 668",
      "M978 540Q970 500 995 500Q1005 470 1018 485Q1022 500 1022 515Q1045 515 1033 545Q1020 560 1008 550Q1000 590 985 580Q975 565 985 550Z",
      // padlock, puzzle, shapes
      "M620 640L645 655Q653 660 652 672L645 720Q642 727 636 723L615 710Q609 705 610 695ZM625 640Q625 605 636 602Q648 610 645 652",
      "M690 765L710 750L708 740L718 738L720 745L732 728L735 760L728 765L735 775L738 800L712 833L705 832L707 815L692 810L695 790L688 785Z",
      "M460 620Q455 660 470 680Q490 690 482 740Q470 750 460 710L430 750Q420 740 470 655M590 625Q590 690 485 725M485 740Q520 790 555 760Q585 720 587 625M245 655L275 622M245 655Q300 750 345 690L350 622M355 680Q345 720 350 735Q370 750 378 700Q375 665 355 680M355 740Q355 830 300 830Q260 830 248 780M365 845L367 795L382 822L398 795L398 845M553 845L557 805L587 845L618 795L622 845M72 840L85 810L100 845M105 845L120 800",
      // rope and whale
      "M260 1275Q270 1230 290 1220Q370 1330 400 1270L412 1160M260 1275L310 1265Q380 1310 410 1275M412 1160Q405 1300 418 1338Q430 1300 437 1200L480 1265M295 1235L277 1170M280 1165Q310 1230 360 1185L380 1160M300 1165Q330 1225 345 1162M465 1165L480 1262M575 1162L590 1180",
      // hanging letters
      "M712 1183L726 1218L742 1190Q754 1186 750 1204L736 1240L752 1268Q752 1285 740 1278L728 1258L712 1305Q703 1318 702 1300L718 1238L703 1195Q703 1182 712 1183ZM770 1168Q780 1165 783 1180L810 1285Q810 1305 800 1295L790 1265L775 1262L768 1315Q760 1330 757 1310L762 1190ZM775 1240L785 1245L778 1205Z",
      // alarm clock
      "M848 1210Q850 1180 870 1185L960 1210Q985 1215 983 1260L975 1330Q970 1355 955 1352L865 1330Q843 1320 845 1290ZM938 1203Q940 1180 950 1180Q965 1185 965 1210M860 1332L862 1348Q865 1360 955 1380L960 1355M828 1205L843 1210M835 1160L860 1180M865 1215L882 1218L885 1290Q885 1315 870 1310Q863 1305 867 1285L870 1245Q860 1240 865 1215ZM893 1235L898 1237M892 1275L897 1277M905 1222L920 1228L925 1300Q923 1325 910 1318L908 1255Q900 1252 905 1222ZM932 1234Q955 1222 962 1250Q964 1268 956 1280Q970 1300 958 1325Q940 1345 930 1320Q930 1305 942 1310Q950 1300 940 1290Q935 1278 945 1268Q948 1255 938 1258Q927 1255 932 1234Z",
      "M590 1280Q580 1250 600 1245Q605 1205 625 1220Q640 1235 635 1255Q650 1265 643 1290Q630 1300 618 1290Q610 1330 590 1315Q583 1300 590 1280Z",
      "M458 1385Q465 1305 503 1303Q545 1310 550 1385M495 1385L500 1365L520 1380M650 1385Q660 1340 685 1345Q705 1355 710 1385M1023 1385L1060 1330L1075 1330L1100 1385M75 1440L72 1275L118 1335M135 1385L133 1362M210 1360L240 1385M677 1160L680 1172L700 1162",
    ],
  },
];

@customElement("chat-wallpaper")
class ChatWallpaper extends LitElement {
  static styles = css`
    :host { display: block; }
    .canvas { display: block; width: 1179px; height: 2028px; }
    .ink { fill: none; stroke: #262626; stroke-width: 2.4; stroke-linecap: round; stroke-linejoin: round; }
    .ink path, .ink ellipse { vector-effect: non-scaling-stroke; }
  `;
  private patch(p: Patch) {
    return svg`<g transform="translate(${p.x} ${p.y}) scale(${p.sx} ${p.sy})">
      ${p.paths.map((d) => svg`<path d=${d}></path>`)}
      ${p.dots.map(([r, c]) => {
        const out = [];
        for (let i = 0; i < c.length; i += 2)
          out.push(svg`<ellipse cx=${c[i]} cy=${c[i + 1]} rx=${r / p.sx} ry=${(r * 0.98) / p.sy}></ellipse>`);
        return out;
      })}
    </g>`;
  }
  render() {
    const east = [EAST_A, EAST_B, EAST_C];
    return html`<svg class="canvas" viewBox="0 293 1179 2028">
      <g class="ink">
        ${MID.map((p) => this.patch(p))}
        ${east.map((p) => this.patch(p))}
        <g transform="translate(-1121 0)">${east.map((p) => this.patch(p))}</g>
      </g>
    </svg>`;
  }
}

/* ---------- text that is tracked to a given measure ---------- */

@customElement("tracked-text")
class TrackedText extends LitElement {
  @property() text = "";
  @property({ type: Number }) measure = 0;
  static styles = css`
    :host { display: block; white-space: pre; }
    .run { display: inline-block; }
  `;
  render() {
    return html`<span class="run">${this.text}</span>`;
  }
  firstUpdated() {
    const run = this.renderRoot.querySelector<HTMLElement>(".run")!;
    const gap = (this.measure - run.getBoundingClientRect().width) / this.text.length;
    run.style.letterSpacing = `${gap.toFixed(3)}px`;
  }
}

/* ---------- reactions ---------- */

const face = svg`
  <defs>
    <radialGradient id="skin" cx="50%" cy="30%" r="72%">
      <stop offset="0" stop-color="#fff04f"></stop>
      <stop offset=".6" stop-color="#ffc82c"></stop>
      <stop offset="1" stop-color="#e77f05"></stop>
    </radialGradient>
  </defs>
  <circle cx="27" cy="27" r="24.500" fill="url(#skin)"></circle>`;

const EMOJI: Record<string, unknown> = {
  pray: svg`
    <defs><linearGradient id="hand" x1="0" x2="1"><stop offset="0" stop-color="#f0990e"></stop><stop offset=".45" stop-color="#ffd24a"></stop><stop offset=".55" stop-color="#ffcf3f"></stop><stop offset="1" stop-color="#ee930d"></stop></linearGradient>
    <linearGradient id="cuff" x1="0" y1="0" x2="0" y2="1"><stop offset="0" stop-color="#65a9ee"></stop><stop offset="1" stop-color="#3778c4"></stop></linearGradient></defs>
    <path d="M0 44L14 38L24 49L19 53H0ZM53 44L39 38L30 49L35 53H53Z" fill="url(#cuff)"></path>
    <path d="M23 2Q27 .5 27 4V43L20 49Q15 46 12 39Q18 33 18.500 22Z" fill="url(#hand)"></path>
    <path d="M31 2Q27 .5 27 4V43L33 49Q39 46 42 39Q36 33 35.500 22Z" fill="url(#hand)"></path>
    <path d="M27 4V44" stroke="#a85c06" stroke-width="1.600"></path>`,
  love: svg`${face}
    <path d="M14.500 31C5 24 4 17 9 15Q13 14 15 18Q19 13 22 17Q25 22 14.500 31ZM39.500 31C49 24 50 17 45 15Q41 14 39 18Q35 13 32 17Q29 22 39.500 31Z" fill="#f0303a"></path>
    <path d="M14 37Q27 42 40 37Q37 47 27 47Q17 47 14 37Z" fill="#7a4508"></path>`,
  heart: svg`
    <defs><linearGradient id="red" x1="0" y1="0" x2="0" y2="1"><stop offset="0" stop-color="#ff7a72"></stop><stop offset=".25" stop-color="#ff4034"></stop><stop offset=".7" stop-color="#fb2e22"></stop><stop offset="1" stop-color="#c40b06"></stop></linearGradient></defs>
    <path d="M27 51C12 38 2 30 2 17Q3 4 14 3Q23 3 27 12Q31 3 40 3Q51 4 52 17C52 30 42 38 27 51Z" fill="url(#red)"></path>`,
  joy: svg`${face}
    <path d="M11 22Q16 15 22 22M32 22Q38 15 43 22" fill="none" stroke="#7a4508" stroke-width="2.600" stroke-linecap="round"></path>
    <path d="M12 30H42Q41 46 27 46Q13 46 12 30Z" fill="#7a4508"></path>
    <path d="M13 30H41Q40 36 27 36Q14 36 13 30Z" fill="#fff"></path>
    <path d="M9 29Q11 40 5 41Q-1 41 1 35Q3 30 9 29ZM45 29Q43 40 49 41Q55 41 53 35Q51 30 45 29Z" fill="#52c3f5"></path>`,
};

@customElement("chat-reaction")
class ChatReaction extends LitElement {
  @property() kind = "";
  static styles = css`
    :host { display: block; }
    .pill {
      box-sizing: border-box; width: 107px; height: 78px; border-radius: 39px;
      border: 3px solid #0d0f0e; background: #242625; padding-right: 1px;
      display: flex; align-items: center; justify-content: center;
    }
    .glyph { display: block; width: 54px; height: 54px; overflow: visible; }
    .top { display: flex; flex-direction: column; align-items: center; padding-top: 1px; }
    .arrow { display: block; width: 30px; height: 29px; }
    .word { font: 700 21px/22px Roboto, "Liberation Sans", sans-serif; letter-spacing: -.8px; color: #4a4c4b; margin-top: 2px; }
  `;
  render() {
    return html`<div class="pill">
      ${this.kind === "top"
        ? html`<div class="top">
            <svg class="arrow" viewBox="0 0 30 29"><path d="M15 0L29 18H21V29H9V18H1Z" fill="#4a4c4b"></path></svg>
            <span class="word">TOP</span>
          </div>`
        : html`<svg class="glyph" viewBox="0 0 54 54">${EMOJI[this.kind]}</svg>`}
    </div>`;
  }
}

/* ---------- message ---------- */

@customElement("chat-message")
class ChatMessage extends LitElement {
  @property({ attribute: false }) msg!: Message;
  static styles = css`
    :host { display: block; }
    .bubble {
      box-sizing: border-box; display: flex; flex-direction: column;
      padding: 17px 31px 20px 31px; border-radius: 39px; background: #222627; color: #fafafa;
    }
    .bubble.quoted { padding-top: 12px; }
    .text { font-size: 49px; line-height: 66px; }
    .time { align-self: flex-end; margin-top: -34px; font-size: 35px; line-height: 36px; color: #a1a3a3; }
    .time.below { margin-top: 17px; }
    .quote {
      margin: 0 -19px 14px -19px; padding: 23px 20px 33px 39px; border-radius: 24px;
      background: linear-gradient(to right, #53a6fd 12px, #1d1f1e 12px);
    }
    .author { font-size: 43px; line-height: 54px; font-weight: 600; color: #53a6fd; margin-bottom: 9px; }
    .excerpt { font-size: 38px; line-height: 54px; color: #c9cbca; }
    .reaction { margin: -12px 0 -66px 31px; }
  `;
  render() {
    const m = this.msg;
    return html`
      <div class="bubble ${m.quote ? "quoted" : ""}" style="width:${m.width}px">
        ${m.quote
          ? html`<div class="quote">
              <tracked-text class="author" text="You" measure="79"></tracked-text>
              ${QUOTE.map((l) => html`<tracked-text class="excerpt" .text=${l.text} .measure=${l.w}></tracked-text>`)}
            </div>`
          : ""}
        ${m.lines.map((l) => html`<tracked-text class="text" .text=${l.text} .measure=${l.w}></tracked-text>`)}
        <tracked-text class="time ${m.timeBelow ? "below" : ""}" .text=${m.time} .measure=${m.timeW}></tracked-text>
      </div>
      ${m.reaction ? html`<chat-reaction class="reaction" kind=${m.reaction}></chat-reaction>` : ""}
    `;
  }
}

/* ---------- page ---------- */

@customElement("app-root")
class AppRoot extends LitElement {
  static styles = css`
    :host { display: block; font-family: Inter, "Liberation Sans", sans-serif; color: #fafafa; }
    .phone { width: 1179px; height: 2556px; display: flex; flex-direction: column; overflow: hidden; background: #090909; }
    .top {
      box-sizing: border-box; height: 294px; flex: none; display: flex; flex-direction: column;
      border-bottom: 1px solid #3a3d3c;
      background:
        linear-gradient(to bottom, rgba(35,37,37,0) 100px, rgba(35,37,37,.35) 210px, rgba(35,37,37,.88) 292px),
        linear-gradient(to right, #1e1e1e 0, #1e1e1e 200px, #202524 290px, #283a34 370px, #293d36 460px, #2b3d33 610px, #263c33 740px, #263c32 1040px, #25342f 1130px, #242c29 1179px);
    }
    .status { display: flex; align-items: center; height: 172px; padding: 4px 98px 0 147px; box-sizing: border-box; }
    .clock { font-size: 51px; font-weight: 600; line-height: 60px; flex: 1; }
    .signal { width: 58px; height: 38px; margin-right: 22px; }
    .wifi { width: 51px; height: 38px; margin-right: 22px; }
    .battery { display: flex; align-items: center; gap: 3px; }
    .cell {
      width: 75px; height: 41px; border-radius: 13px; text-align: center;
      background: linear-gradient(to right, #fff 48px, #929b97 48px);
      color: #263b33; font-size: 35px; font-weight: 700; line-height: 41px; letter-spacing: -1px;
    }
    .nub { width: 4px; height: 13px; border-radius: 0 4px 4px 0; background: #7f8a86; }
    .nav { display: flex; align-items: center; height: 108px; padding-left: 26px; }
    .back { width: 38px; height: 60px; }
    .count { font-size: 49px; line-height: 60px; width: 91px; padding-left: 27px; }
    .avatar { width: 108px; height: 108px; }
    .name { font-size: 48px; font-weight: 600; line-height: 60px; margin-left: 31px; flex: 1; }
    .video { width: 78px; height: 56px; margin-right: 73px; margin-bottom: 3px; }
    .call { width: 64px; height: 64px; margin-right: 82px; margin-bottom: 3px; }
    .chat { position: relative; flex: none; height: 2027px; overflow: hidden; }
    .paper { position: absolute; left: 0; top: -1px; }
    .list { position: relative; display: flex; flex-direction: column; align-items: flex-start; gap: 9px; padding-left: 48px; margin-top: -46px; }
    .first { margin-bottom: 1px; }
    .spaced { margin-bottom: 66px; }
    .down {
      position: absolute; left: 1056px; top: 1859px; width: 96px; height: 96px; border-radius: 50%;
      background: #242625; display: flex; align-items: center; justify-content: center;
    }
    .down svg { width: 40px; height: 26px; }
    .bottom { flex: 1; box-sizing: border-box; border-top: 1px solid #3d3f3e; background: #242625; display: flex; flex-direction: column; align-items: center; }
    .composer { display: flex; align-items: center; width: 1179px; height: 90px; margin-top: 21px; box-sizing: border-box; padding-left: 40px; }
    .plus { width: 60px; height: 60px; margin-right: 41px; }
    .field {
      box-sizing: border-box; width: 756px; height: 90px; border-radius: 45px; border: 1px solid #4c4d4c; background: #3a3b3a;
      display: flex; align-items: center; justify-content: flex-end; padding-right: 34px;
    }
    .sticker { width: 56px; height: 56px; }
    .camera { width: 70px; height: 56px; margin-left: 55px; }
    .mic { width: 48px; height: 70px; margin-left: 58px; margin-bottom: 4px; }
    .home { width: 420px; height: 15px; border-radius: 8px; background: #fff; margin-top: 84px; }
    .line { fill: none; stroke: #fafafa; stroke-linecap: round; stroke-linejoin: round; }
    svg { display: block; flex: none; }
  `;

  render() {
    return html`
      <div class="phone">
        <header class="top">
          <div class="status">
            <tracked-text class="clock" text="16:40" measure="137"></tracked-text>
            <svg class="signal" viewBox="0 0 58 38" fill="#fff">
              <rect x="0" y="23.500" width="10" height="14" rx="3"></rect>
              <rect x="16" y="16.500" width="10" height="21" rx="3"></rect>
              <rect x="32" y="8.500" width="10" height="29" rx="3"></rect>
              <rect x="48" y=".5" width="10" height="37" rx="3" fill="#52655e"></rect>
            </svg>
            <svg class="wifi" viewBox="0 0 51 38">
              <path d="M0 11.500Q11 .5 25.500 .5T51 11.500L46 16.500Q37 7.500 25.500 7.500T5 16.500Z" fill="#52655e"></path>
              <path d="M9 20.500Q16.500 13 25.500 13T42 20.500L37 25.500Q32 20.500 25.500 20.500T14 25.500Z" fill="#fff"></path>
              <path d="M17.500 29Q21 26 25.500 26T33.500 29L25.500 37.500Z" fill="#fff"></path>
            </svg>
            <div class="battery"><div class="cell">64</div><div class="nub"></div></div>
          </div>
          <div class="nav">
            <svg class="back" viewBox="0 0 38 60"><path class="line" stroke-width="7" d="M31.500 6L5.500 30L31.500 54"></path></svg>
            <span class="count">2</span>
            <svg class="avatar" viewBox="0 0 108 108">
              <defs><linearGradient id="av" x1="0" y1="0" x2="0" y2="1"><stop offset="0" stop-color="#a7abb7"></stop><stop offset="1" stop-color="#848892"></stop></linearGradient></defs>
              <circle cx="54" cy="54" r="54" fill="url(#av)"></circle>
              <ellipse cx="54" cy="43" rx="18.500" ry="20" fill="#fff"></ellipse>
              <path d="M21 86Q30 72 54 72T87 86Q75 100 54 100T21 86Z" fill="#fff"></path>
            </svg>
            <tracked-text class="name" text="Moreira" measure="173"></tracked-text>
            <svg class="video" viewBox="0 0 78 56">
              <rect class="line" stroke-width="5" x="3.500" y="4.500" width="51" height="47" rx="9"></rect>
              <path class="line" stroke-width="5" d="M55 21L68 10.500Q74 7 74.500 13V43Q74 49 68 45.500L55 35"></path>
            </svg>
            <svg class="call" viewBox="0 0 64 64">
              <path class="line" stroke-width="5" d="M8.500 6.500Q13 2 17 6.500L25.500 18Q27 21 24.500 24Q21 27 20.500 29Q21 35 35 46Q37.500 47 40 43.500Q44 38.500 48 40.500L58.500 48Q61.500 50.500 59.500 54.500Q55 61.500 45 60.500C24 57 5 35 4.500 17.500Q4.500 10.500 8.500 6.500Z"></path>
            </svg>
          </div>
        </header>

        <main class="chat">
          <chat-wallpaper class="paper"></chat-wallpaper>
          <div class="list">
            ${MESSAGES.map((m) => html`<chat-message class="${m.id === 1 ? "first" : m.reaction ? "spaced" : ""}" .msg=${m}></chat-message>`)}
          </div>
          <div class="down"><svg viewBox="0 0 40 26"><path class="line" stroke-width="5.500" d="M4 4L20 20L36 4"></path></svg></div>
        </main>

        <footer class="bottom">
          <div class="composer">
            <svg class="plus" viewBox="0 0 60 60"><path class="line" stroke-width="5.500" d="M30 3V57M3 30H57"></path></svg>
            <div class="field">
              <svg class="sticker" viewBox="0 0 56 56">
                <path class="line" stroke-width="4" d="M53 31V22Q53 3 34 3H22Q3 3 3 22V34Q3 53 22 53H31Q36 53 40 49L49 41Q53 37 53 31Z"></path>
                <path class="line" stroke-width="4" d="M52 31H44Q31 32 31 44V52"></path>
              </svg>
            </div>
            <svg class="camera" viewBox="0 0 70 56">
              <path class="line" stroke-width="4.500" d="M8 10.500H18Q20 10.500 22 8L24.500 5.500Q26.500 3 29 3H41.500Q44 3 46 5.500L48.500 8Q50.500 10.500 52.500 10.500H62Q67.500 10.500 67.500 16V47Q67.500 52.500 62 52.500H8Q3 52.500 3 47V16Q3 10.500 8 10.500Z"></path>
              <circle class="line" stroke-width="4.500" cx="35.500" cy="31" r="13.500"></circle>
              <circle cx="55.500" cy="20.500" r="3.600" fill="#fafafa"></circle>
            </svg>
            <svg class="mic" viewBox="0 0 48 70">
              <rect class="line" stroke-width="4.800" x="13" y="3" width="22" height="44" rx="11"></rect>
              <path class="line" stroke-width="4.600" d="M3 36Q4 58 24 58T45 36M24 58V68"></path>
            </svg>
          </div>
          <div class="home"></div>
        </footer>
      </div>
    `;
  }
}
